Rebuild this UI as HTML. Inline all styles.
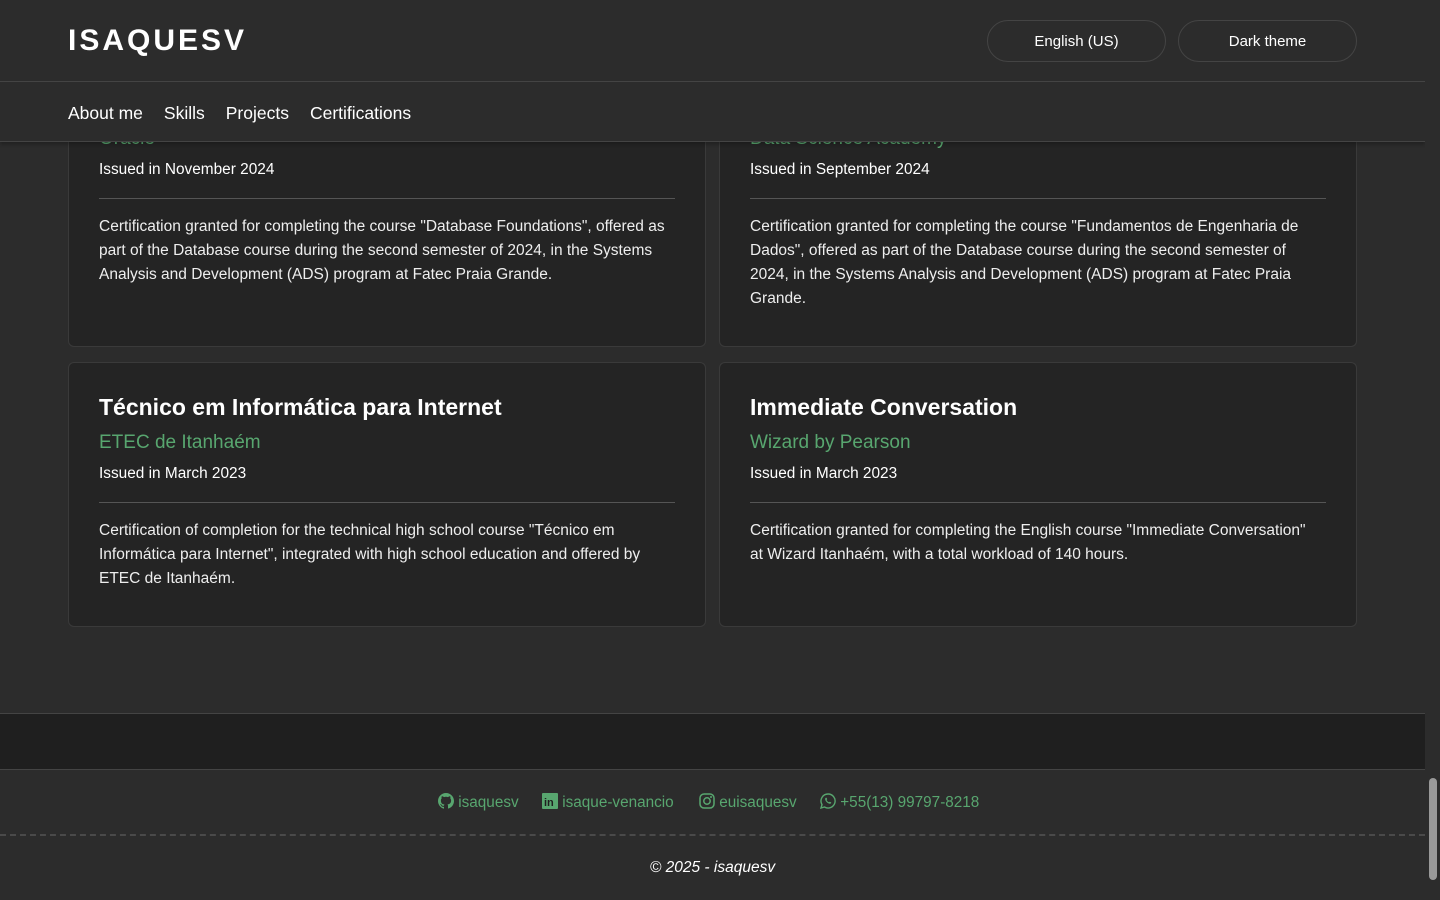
<!DOCTYPE html>
<html><head><meta charset="utf-8"><style>
*{margin:0;padding:0;box-sizing:border-box}
body{width:1440px;height:900px;overflow:hidden;background:#2c2c2c;font-family:"Liberation Sans",sans-serif;color:#fff;position:relative}
.a{position:absolute}
.card{position:absolute;background:#242424;border:1px solid #3a3a3a;border-radius:6px}
.card .t{position:absolute;left:30px;font-size:23px;font-weight:bold;white-space:nowrap}
.card .i{position:absolute;left:30px;font-size:19px;color:#58a66f;white-space:nowrap}
.card .d{position:absolute;left:30px;font-size:15.4px;white-space:nowrap}
.card .hr{position:absolute;left:30px;right:30px;height:1px;background:#555}
.card .p{position:absolute;left:30px;font-size:15.5px;line-height:24px;white-space:nowrap;color:#eee}
.btn{position:absolute;top:20px;width:179px;height:42px;border:1px solid #444;border-radius:21px;text-align:center;line-height:42px;font-size:15px}
.soc{position:absolute;top:793px;font-size:15.3px;color:#58a66f;white-space:nowrap}
</style></head><body>
<div class="card" style="left:68px;top:58px;width:638px;height:289px">
<div class="i" style="top:69px">Oracle</div>
<div class="d" style="top:102px">Issued in November 2024</div>
<div class="hr" style="top:139px"></div>
<div class="p" style="top:156px">Certification granted for completing the course "Database Foundations", offered as<br>part of the Database course during the second semester of 2024, in the Systems<br>Analysis and Development (ADS) program at Fatec Praia Grande.</div>
</div>
<div class="card" style="left:719px;top:58px;width:638px;height:289px">
<div class="i" style="top:69px">Data Science Academy</div>
<div class="d" style="top:102px">Issued in September 2024</div>
<div class="hr" style="top:139px"></div>
<div class="p" style="top:156px">Certification granted for completing the course "Fundamentos de Engenharia de<br>Dados", offered as part of the Database course during the second semester of<br>2024, in the Systems Analysis and Development (ADS) program at Fatec Praia<br>Grande.</div>
</div>
<div class="card" style="left:68px;top:362px;width:638px;height:265px">
<div class="t" style="top:31px">Técnico em Informática para Internet</div>
<div class="i" style="top:69px">ETEC de Itanhaém</div>
<div class="d" style="top:102px">Issued in March 2023</div>
<div class="hr" style="top:139px"></div>
<div class="p" style="top:156px">Certification of completion for the technical high school course "Técnico em<br>Informática para Internet", integrated with high school education and offered by<br>ETEC de Itanhaém.</div>
</div>
<div class="card" style="left:719px;top:362px;width:638px;height:265px">
<div class="t" style="top:31px">Immediate Conversation</div>
<div class="i" style="top:69px">Wizard by Pearson</div>
<div class="d" style="top:102px">Issued in March 2023</div>
<div class="hr" style="top:139px"></div>
<div class="p" style="top:156px">Certification granted for completing the English course "Immediate Conversation"<br>at Wizard Itanhaém, with a total workload of 140 hours.</div>
</div>

<div class="a" style="left:0;top:0;width:1425px;height:142px;background:#2c2c2c;border-bottom:1px solid #444;box-shadow:0 2px 4px rgba(0,0,0,.3)"></div>
<div class="a" style="left:0;top:81px;width:1425px;height:1px;background:#444"></div>
<div class="a" style="left:68px;top:24px;font-size:30px;font-weight:bold;letter-spacing:3px">ISAQUESV</div>
<div class="btn" style="left:987px">English (US)</div>
<div class="btn" style="left:1178px">Dark theme</div>
<div class="a" style="left:68px;top:103px;font-size:17.5px;white-space:nowrap">About me<span style="margin-left:21px">Skills</span><span style="margin-left:21px">Projects</span><span style="margin-left:21px">Certifications</span></div>

<div class="a" style="left:0;top:713px;width:1425px;height:57px;background:#1f1f1f;border-top:1px solid #444;border-bottom:1px solid #444"></div>
<div class="soc" style="left:438px"><svg width="16" height="16" viewBox="0 0 16 16" style="vertical-align:-2px"><path fill="#58a66f" d="M8 0C3.6 0 0 3.6 0 8c0 3.5 2.3 6.5 5.5 7.6.4.1.5-.2.5-.4v-1.4c-2.2.5-2.7-1-2.7-1-.4-.9-.9-1.2-.9-1.2-.7-.5.1-.5.1-.5.8.1 1.200.8 1.2.8.7 1.3 1.9.9 2.3.7.1-.5.3-.9.5-1.1-1.8-.2-3.6-.9-3.6-4 0-.9.3-1.6.8-2.1-.1-.2-.4-1 .1-2.1 0 0 .7-.2 2.2.8.6-.2 1.3-.3 2-.3s1.4.1 2 .3c1.5-1 2.2-.8 2.2-.8.4 1.1.2 1.9.1 2.1.5.6.8 1.3.8 2.1 0 3.1-1.9 3.7-3.6 3.900.3.3.5.8.5 1.5v2.2c0 .2.1.5.6.4C13.7 14.5 16 11.5 16 8c0-4.4-3.6-8-8-8z"/></svg> isaquesv</div>
<div class="soc" style="left:542px"><svg width="16" height="16" viewBox="0 0 16 16" style="vertical-align:-2px"><rect width="16" height="16" rx="1" fill="#58a66f"/><text x="2" y="13" font-size="11" font-weight="bold" fill="#1f1f1f" font-family="Liberation Sans">in</text></svg> isaque-venancio</div>
<div class="soc" style="left:699px"><svg width="16" height="16" viewBox="0 0 16 16" style="vertical-align:-2px"><rect x="1" y="1" width="14" height="14" rx="4" fill="none" stroke="#58a66f" stroke-width="1.5"/><circle cx="8" cy="8" r="3.2" fill="none" stroke="#58a66f" stroke-width="1.5"/><circle cx="12" cy="4" r="1" fill="#58a66f"/></svg> euisaquesv</div>
<div class="soc" style="left:820px"><svg width="16" height="16" viewBox="0 0 16 16" style="vertical-align:-2px"><path d="M8 1a7 7 0 0 0-6 10.6L1 15l3.5-1A7 7 0 1 0 8 1z" fill="none" stroke="#58a66f" stroke-width="1.4"/><path d="M5.5 5c.3-.5 1-.5 1.2 0l.5 1.2-.6.8c.5 1 1.3 1.8 2.300 2.3l.8-.6 1.2.5c.5.2.5.9 0 1.2-1 .8-3 0-4.300-1.4S4.7 6 5.5 5z" fill="#58a66f"/></svg> +55(13) 99797-8218</div>
<div class="a" style="left:0;top:834px;width:1425px;border-top:2px dashed #4a4a4a"></div>
<div class="a" style="left:0;top:859px;width:1425px;text-align:center;font-size:15.5px;font-style:italic">© 2025 - isaquesv</div>

<div class="a" style="left:1425px;top:0;width:15px;height:900px;background:#2c2c2c"></div>
<div class="a" style="left:1429px;top:778px;width:8px;height:102px;background:#999;border-radius:4px"></div>
</body></html>
